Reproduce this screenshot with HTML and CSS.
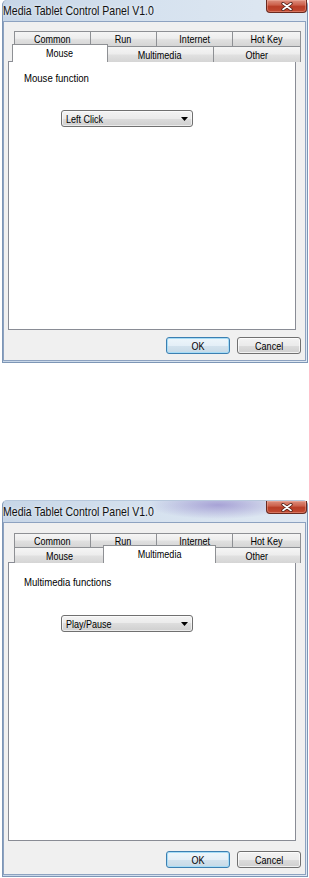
FILE: index.html
```html
<!DOCTYPE html>
<html>
<head>
<meta charset="utf-8">
<link rel="stylesheet" href="styles.css">
</head>
<body>
<div class="window w1">
  <div class="titlebar">
    <span class="title sx">Media Tablet Control Panel V1.0</span>
    <div class="close"><svg width="14" height="9" viewBox="0 0 14 9"><path d="M3 1.5L11 7.5M11 1.5L3 7.5" stroke="#4a1a12" stroke-width="3.2" stroke-linecap="round"/><path d="M3 1.5L11 7.5M11 1.5L3 7.5" stroke="#fff" stroke-width="1.6" stroke-linecap="round"/></svg></div>
  </div>
  <div class="client">
    <div class="tabs">
      <div class="tabrow row1">
        <div class="tab t-common"><span class="sx">Common</span></div>
        <div class="tab t-run"><span class="sx">Run</span></div>
        <div class="tab t-internet"><span class="sx">Internet</span></div>
        <div class="tab t-hotkey"><span class="sx">Hot Key</span></div>
      </div>
      <div class="tabrow row2">
        <div class="tab t-mouse active"><span class="sx">Mouse</span></div>
        <div class="tab t-multi"><span class="sx">Multimedia</span></div>
        <div class="tab t-other"><span class="sx">Other</span></div>
      </div>
    </div>
    <div class="panel">
      <div class="label"><span class="sx">Mouse function</span></div>
      <div class="combo"><span class="sx">Left Click</span><svg width="7" height="4" viewBox="0 0 7 4"><path d="M0 0H7L3.5 4Z" fill="#000"/></svg></div>
    </div>
    <div class="buttons">
      <div class="btn default"><span class="sx">OK</span></div>
      <div class="btn"><span class="sx">Cancel</span></div>
    </div>
  </div>
</div>

<div class="window w2">
  <div class="titlebar">
    <span class="title sx">Media Tablet Control Panel V1.0</span>
    <div class="close"><svg width="14" height="9" viewBox="0 0 14 9"><path d="M3 1.5L11 7.5M11 1.5L3 7.5" stroke="#4a1a12" stroke-width="3.2" stroke-linecap="round"/><path d="M3 1.5L11 7.5M11 1.5L3 7.5" stroke="#fff" stroke-width="1.6" stroke-linecap="round"/></svg></div>
  </div>
  <div class="client">
    <div class="tabs">
      <div class="tabrow row1">
        <div class="tab t-common"><span class="sx">Common</span></div>
        <div class="tab t-run"><span class="sx">Run</span></div>
        <div class="tab t-internet"><span class="sx">Internet</span></div>
        <div class="tab t-hotkey"><span class="sx">Hot Key</span></div>
      </div>
      <div class="tabrow row2">
        <div class="tab t-mouse"><span class="sx">Mouse</span></div>
        <div class="tab t-multi active"><span class="sx">Multimedia</span></div>
        <div class="tab t-other"><span class="sx">Other</span></div>
      </div>
    </div>
    <div class="panel">
      <div class="label"><span class="sx">Multimedia functions</span></div>
      <div class="combo"><span class="sx">Play/Pause</span><svg width="7" height="4" viewBox="0 0 7 4"><path d="M0 0H7L3.5 4Z" fill="#000"/></svg></div>
    </div>
    <div class="buttons">
      <div class="btn default"><span class="sx">OK</span></div>
      <div class="btn"><span class="sx">Cancel</span></div>
    </div>
  </div>
</div>
</body>
</html>
```
FILE: styles.css
```css
* { box-sizing: border-box; }
html, body { margin: 0; padding: 0; background: #fff; }
body {
  width: 309px;
  font-family: "Liberation Sans", Arial, sans-serif;
  font-size: 11px;
  color: #000;
}

/* narrow rendering of the dialog font */
.sx {
  display: inline-block;
  transform: scaleX(0.82);
  transform-origin: center;
  white-space: nowrap;
}

.window {
  width: 306px;
  margin-left: 2px;
  border: 1px solid #7d96b6;
  border-top-color: #b7c8dc;
  border-radius: 5px 5px 0 0;
  padding: 0 1px 1px 0;
  background: linear-gradient(90deg, #c7d6e7 0%, #d6e2ef 50%, #dfe8f2 100%);
}
.w1 { border-top: none; }
.w2 { margin-top: 137px; }

.titlebar {
  display: flex;
  justify-content: space-between;
  align-items: flex-start;
  height: 21px;
  margin-right: -1px;
}
.w2 .titlebar {
  background: radial-gradient(ellipse 70px 14px at 215px 4px, rgba(150, 140, 205, 0.75), rgba(150, 140, 205, 0) 100%);
}
.title {
  font-size: 13px;
  line-height: 13px;
  margin-top: 4px;
  transform: scaleX(0.81);
  transform-origin: left center;
  color: #111;
  text-shadow: 0 0 4px rgba(255, 255, 255, 0.9);
}
.close {
  width: 41px;
  height: 13px;
  border: 1px solid #6a2a20;
  border-top: none;
  border-radius: 0 0 4px 4px;
  background: linear-gradient(#dc8f7f 0%, #cd624d 40%, #b83d27 55%, #c24a32 100%);
  display: flex;
  align-items: center;
  justify-content: center;
  box-shadow: inset 0 0 0 1px rgba(255, 200, 185, 0.35);
}

.client {
  background: #f0f0f0;
  border: 1px solid #8da2c0;
  padding: 0 4px 6px 4px;
}

.tabs { margin-top: 9px; margin-left: 6px; }
.w2 .tabs { margin-top: 10px; }
.tabrow { display: flex; align-items: flex-start; }
.tab {
  height: 15px;
  border: 1px solid #8e9094;
  border-bottom: none;
  background: linear-gradient(#f5f5f5 0%, #ededed 45%, #e0e0e0 55%, #d5d5d5 100%);
  display: flex;
  align-items: center;
  justify-content: center;
  margin-left: -1px;
  white-space: nowrap;
}
.tab:first-child { margin-left: 0; }
.row2 .tab { height: 16px; }
.w2 .row1 .tab { height: 14px; }

.t-common { width: 77px; }
.t-run { width: 67px; }
.t-internet { width: 77px; }
.t-hotkey { width: 69px; }
.t-mouse { width: 92px; }
.t-multi { width: 109px; }
.t-other { width: 88px; }

.row2 .tab.active {
  position: relative;
  z-index: 2;
  background: #fff;
  height: 18px;
  margin-top: -2px;
  margin-left: -3px;
  margin-right: -2px;
  padding-bottom: 1px;
}
.row2 .tab.active:first-child { margin-left: -2px; }
.t-mouse.active { width: 96px; }
.t-multi.active { width: 113px; }

.panel {
  margin-top: -1px;
  margin-right: 5px;
  background: #fff;
  border: 1px solid #898c95;
  height: 269px;
  padding: 10px 15px 0 15px;
}
.w2 .panel { height: 279px; padding-top: 13px; }

.label { line-height: 13px; }
.label .sx { transform: scaleX(0.87); transform-origin: left center; }

.combo {
  width: 132px;
  height: 17px;
  margin: 25px 0 0 37px;
  border: 1px solid #707070;
  border-radius: 3px;
  background: linear-gradient(#f3f3f3 0%, #ebebeb 50%, #dddddd 50%, #cfcfcf 100%);
  display: flex;
  align-items: center;
  justify-content: space-between;
  padding: 0 4px 0 4px;
  box-shadow: inset 0 0 0 1px rgba(255, 255, 255, 0.6);
}
.combo .sx { transform-origin: left center; }
.w2 .combo { margin-top: 26px; }

.buttons {
  display: flex;
  justify-content: flex-end;
  gap: 7px;
  margin-top: 7px;
}
.w2 .buttons { margin-top: 10px; }
.btn {
  width: 64px;
  height: 17px;
  border: 1px solid #707070;
  border-radius: 3px;
  background: linear-gradient(#f3f3f3 0%, #ebebeb 50%, #dddddd 50%, #cfcfcf 100%);
  box-shadow: inset 0 0 0 1px rgba(255, 255, 255, 0.7);
  display: flex;
  align-items: center;
  justify-content: center;
}
.btn.default {
  border-color: #3c7fb1;
  background: linear-gradient(#eef6fb 0%, #e4eff7 50%, #d3e3ee 50%, #c7d9e6 100%);
  box-shadow: inset 0 0 0 1px #a6dcf6;
}
```
